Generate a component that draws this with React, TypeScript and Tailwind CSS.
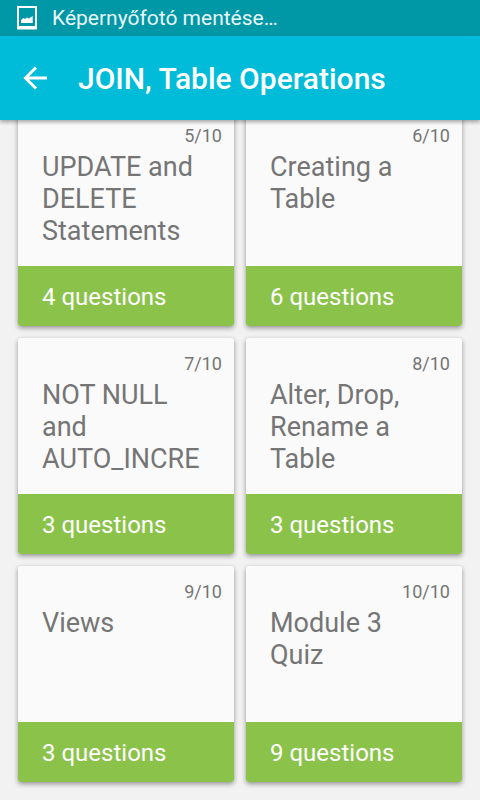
const lessons = [
  { n: 5, title: "UPDATE and DELETE Statements", questions: 4 },
  { n: 6, title: "Creating a Table", questions: 6 },
  { n: 7, title: "NOT NULL and AUTO_INCRE", questions: 3 },
  { n: 8, title: "Alter, Drop, Rename a Table", questions: 3 },
  { n: 9, title: "Views", questions: 3 },
  { n: 10, title: "Module 3 Quiz", questions: 9 },
];

function StatusBar() {
  return (
    <div className="flex h-9 items-center gap-3 bg-[#0097a7] px-4 text-[21px] leading-9 text-[#e8f6f8]">
      <svg className="size-6" viewBox="0 0 24 24" aria-hidden="true">
        <path fillRule="evenodd" d="M1 0h20v23.5H1zM3 2v18h16V2z" fill="#fff" />
        <path d="M5 17v-3l2.5-2 1.5 1 2-1.500 2 1 3.700-2.500v7z" fill="#fff" />
      </svg>
      <span>Képernyőfotó mentése…</span>
    </div>
  );
}

function AppBar() {
  return (
    <header className="flex h-21 items-center bg-[#00bcd9] px-5 pt-px text-white shadow-[0_2px_4px_rgba(0,0,0,0.35)]">
      <button type="button" aria-label="Back" className="mr-[26px]">
        <svg className="size-8" viewBox="0 0 32 32" fill="none" stroke="#fff" strokeWidth="3" aria-hidden="true">
          <path d="M27 15H5M16 4.500L5.500 15 16 25.500" />
        </svg>
      </button>
      <h1 className="text-3xl font-medium">JOIN, Table Operations</h1>
    </header>
  );
}

function LessonCard({ n, title, questions }: { n: number; title: string; questions: number }) {
  return (
    <article className="flex h-54 flex-col overflow-hidden rounded-[3px] bg-[#fafafa] shadow-[0_2px_5px_rgba(0,0,0,0.4)]">
      <p className="px-3 pt-4 text-right text-lg leading-5 text-[#757575]">{n}/10</p>
      <h2 className="grow px-6 pt-[5px] text-[27px] leading-8 text-[#757575]">{title}</h2>
      <p className="flex h-15 items-center bg-[#8bc34a] px-6 pt-0.5 text-2xl text-white">{questions} questions</p>
    </article>
  );
}

export default function App() {
  return (
    <div className="flex h-screen flex-col overflow-hidden bg-[#f2f2f2] font-[Roboto,sans-serif]">
      <div className="relative z-10 shrink-0">
        <StatusBar />
        <AppBar />
      </div>
      <main className="flex min-h-0 grow flex-col justify-end overflow-hidden">
        <div className="grid shrink-0 grid-cols-2 gap-3 px-[18px] pb-[18px]">
          {lessons.map((lesson) => (
            <LessonCard key={lesson.n} {...lesson} />
          ))}
        </div>
      </main>
    </div>
  );
}
